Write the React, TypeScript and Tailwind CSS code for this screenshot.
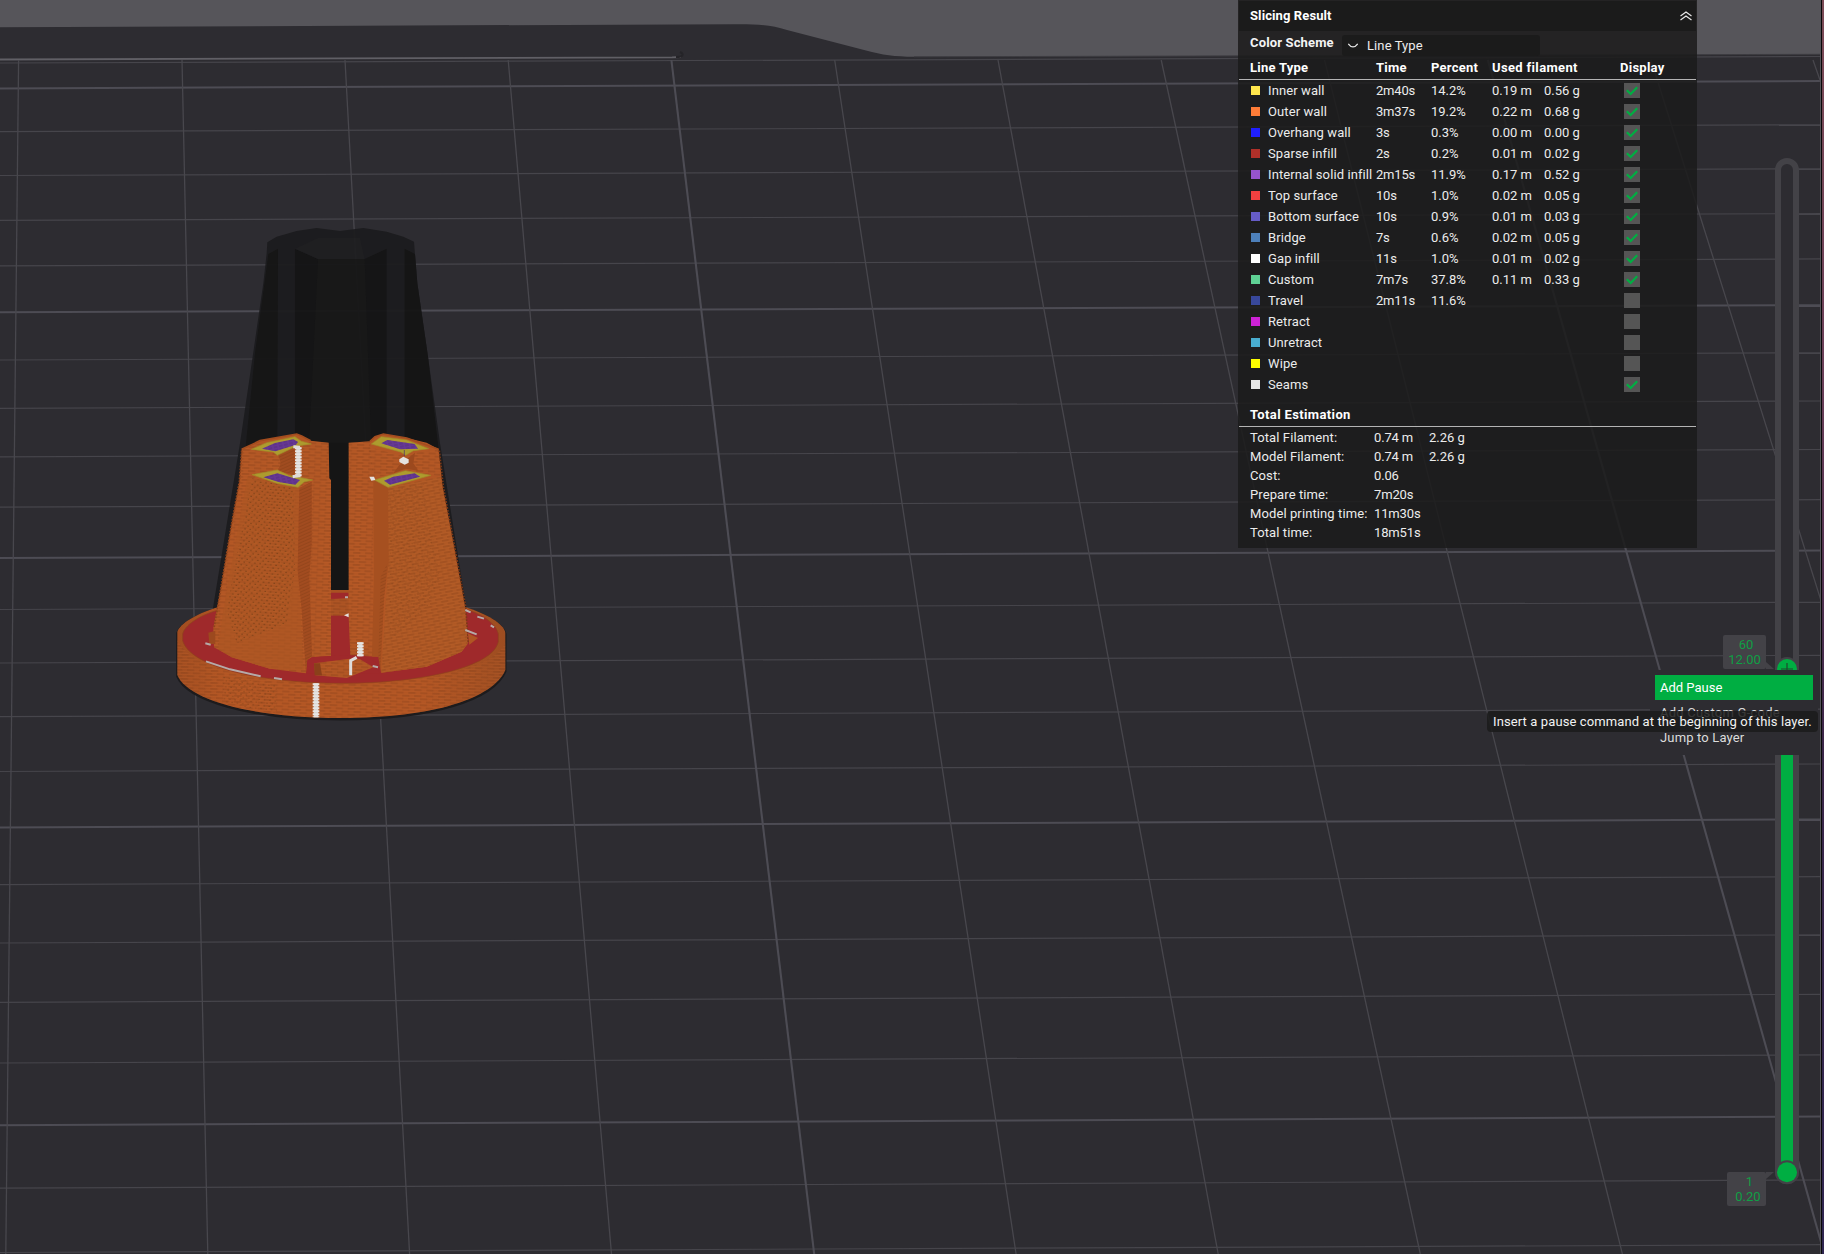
import React from "react";

const GREEN = "#00ae42";

type Row = {
  color: string;
  name: string;
  time?: string;
  percent?: string;
  length?: string;
  weight?: string;
  shown: boolean;
};

const ROWS: Row[] = [
  { color: "#ffe64d", name: "Inner wall", time: "2m40s", percent: "14.2%", length: "0.19 m", weight: "0.56 g", shown: true },
  { color: "#ff7d38", name: "Outer wall", time: "3m37s", percent: "19.2%", length: "0.22 m", weight: "0.68 g", shown: true },
  { color: "#1f1fff", name: "Overhang wall", time: "3s", percent: "0.3%", length: "0.00 m", weight: "0.00 g", shown: true },
  { color: "#b03029", name: "Sparse infill", time: "2s", percent: "0.2%", length: "0.01 m", weight: "0.02 g", shown: true },
  { color: "#9654cc", name: "Internal solid infill", time: "2m15s", percent: "11.9%", length: "0.17 m", weight: "0.52 g", shown: true },
  { color: "#f04040", name: "Top surface", time: "10s", percent: "1.0%", length: "0.02 m", weight: "0.05 g", shown: true },
  { color: "#665cc7", name: "Bottom surface", time: "10s", percent: "0.9%", length: "0.01 m", weight: "0.03 g", shown: true },
  { color: "#4d80ba", name: "Bridge", time: "7s", percent: "0.6%", length: "0.02 m", weight: "0.05 g", shown: true },
  { color: "#ffffff", name: "Gap infill", time: "11s", percent: "1.0%", length: "0.01 m", weight: "0.02 g", shown: true },
  { color: "#5ed194", name: "Custom", time: "7m7s", percent: "37.8%", length: "0.11 m", weight: "0.33 g", shown: true },
  { color: "#38489b", name: "Travel", time: "2m11s", percent: "11.6%", shown: false },
  { color: "#cd22d6", name: "Retract", shown: false },
  { color: "#49adcf", name: "Unretract", shown: false },
  { color: "#ffff00", name: "Wipe", shown: false },
  { color: "#e6e6e6", name: "Seams", shown: true },
];

const TOTALS: [string, string, string?][] = [
  ["Total Filament:", "0.74 m", "2.26 g"],
  ["Model Filament:", "0.74 m", "2.26 g"],
  ["Cost:", "0.06"],
  ["Prepare time:", "7m20s"],
  ["Model printing time:", "11m30s"],
  ["Total time:", "18m51s"],
];

// Plate grid: [y at x=0, y at x=1821, bold]
const H_LINES: [number, number, boolean][] = [
  [63, 56.5, false], [88.4, 81, true], [131.6, 124.8, false], [175.5, 168.8, false],
  [220.3, 213.6, false], [265.9, 258.9, false], [312.3, 305.2, true], [360, 352.8, false],
  [408.3, 401, false], [456.8, 449.5, false], [507.2, 499.7, false], [558, 550.5, true],
  [609.5, 602.3, false], [663, 655.3, false], [716.6, 709.2, false], [771.5, 764, false],
  [827.4, 819.4, true], [884.6, 876.6, false], [943, 934.8, false], [1002.3, 994.3, false],
  [1063, 1054.9, false], [1125.3, 1116.6, true], [1188.2, 1180, false], [1252.5, 1244.7, false],
];

// [x at the far edge, x at the bottom, bold]
const V_LINES: [number, number, boolean][] = [
  [18.6, 5.8, false], [182, 207.8, false], [345, 409.6, false], [508.2, 611.5, false],
  [671.4, 814.2, true], [834.7, 1016.1, false], [998, 1218.2, false], [1161.2, 1420.3, false],
  [1324.5, 1622.4, false], [1487.8, 1824.4, true], [1651, 2026.5, false], [1813, 2228.6, false],
];

function Plate() {
  return (
    <g>
      <rect width="1822" height="1254" fill="#56555a" />
      <path d="M0 27.2L735 24.2C760 24 772 25.500 787 30L866 50.500C882 55 895 56.600 914 56.800L1822 54.300V1254H0Z" fill="#2d2c31" />
      <path d="M0 59.500L672 57.300L681 57" stroke="#605f65" strokeWidth="1.800" fill="none" />
      <path d="M676 57C684 57 684 54 680 52" stroke="#252428" strokeWidth="2" fill="none" />
      <path d="M914 56.800L1822 54.300" stroke="#3d3c41" strokeWidth="1" />
      {H_LINES.map(([a, b, bold]) => (
        <line key={a} x1="0" y1={a} x2="1822" y2={b} stroke={bold ? "#4d4c54" : "#46454b"} strokeWidth={bold ? 2 : 1.2} />
      ))}
      {V_LINES.map(([a, b, bold]) => (
        <line key={a} x1={a} y1="60" x2={b} y2="1254" stroke={bold ? "#4d4c54" : "#48474d"} strokeWidth={bold ? 2.1 : 1.3} />
      ))}
    </g>
  );
}

function Ghost() {
  return (
    <g transform="translate(200 210) scale(0.33333)" opacity="0.94">
      <path d="M202 97L230 80L290 63L350 54L420 63L490 54L560 65L610 80L642 95L645 135L652 220L684 440L720 700L800 1200H38L120 700L158 440L190 220L200 130Z" fill="#1c1c1e" />
      <path d="M205 132L234 116L232 720H136L165 430L196 200Z" fill="#151515" />
      <path d="M285 116L354 147H494L560 116V740H285Z" fill="#141415" />
      <path d="M354 147H494L515 740H325Z" fill="#171717" />
      <path d="M614 116L645 132L652 220L684 440L716 720L780 1190L700 1100L614 720Z" fill="#141414" />
      <path d="M354 84H480L494 147H354L285 116Z" fill="#1f1f21" />
      <path d="M136 720L50 1200H180V720Z" fill="#161617" />
      <rect x="380" y="700" width="72" height="450" fill="#151515" />
    </g>
  );
}

function Seam({ x, y, h }: { x: number; y: number; h: number }) {
  return (
    <g>
      <line x1={x} y1={y} x2={x} y2={y + h} stroke="#d6d3d1" strokeWidth="13" />
      <line x1={x} y1={y} x2={x} y2={y + h} stroke="#e8e6e4" strokeWidth="20" strokeDasharray="6 3" />
    </g>
  );
}

function Island({ outer, inner }: { outer: string; inner: string }) {
  return (
    <g>
      <path d={outer} fill="#ad9b2e" stroke="#a08c29" strokeWidth="2" />
      <path d={inner} fill="#663794" />
      <path d={inner} fill="url(#fill-lines)" />
    </g>
  );
}

const DISC_SIDE =
  "M52 665C60 640 110 612 165 594L300 560H800L917 592C980 612 1030 640 1036 668V780C1000 865 820 924 543 924C260 924 80 865 52 795Z";
const DISC_FRONT =
  "M52 690C90 775 300 822 543 822C790 822 1000 775 1036 700V780C1000 865 820 924 543 924C260 924 80 865 52 795Z";
const DISC_TOP =
  "M68 672C74 646 115 618 168 602L300 570H800L917 598C965 612 1008 640 1015 672V695C1000 770 790 820 543 820C300 820 90 770 68 692Z";

function Model() {
  return (
    <g transform="translate(160 410) scale(0.33333)">
      <defs>
        <pattern id="layers" width="36" height="18" patternUnits="userSpaceOnUse" patternTransform="rotate(2)">
          <path d="M0 3H22M18 12H36M0 12H4" stroke="#7e3b17" strokeWidth="2.200" opacity="0.75" />
          <path d="M0 7H36M0 16H36" stroke="#bf612b" strokeWidth="2" opacity="0.5" />
        </pattern>
        <pattern id="layers-right" width="34" height="18" patternUnits="userSpaceOnUse" patternTransform="rotate(-10)">
          <path d="M0 3H22M17 12H34M0 12H4" stroke="#813d18" strokeWidth="2.200" opacity="0.75" />
          <path d="M0 7H34M0 16H34" stroke="#bd632b" strokeWidth="2" opacity="0.5" />
        </pattern>
        <pattern id="dots" width="16" height="18" patternUnits="userSpaceOnUse" patternTransform="rotate(6)">
          <path d="M1 4H5M9 13H13" stroke="#5a3310" strokeWidth="2.600" />
          <path d="M1 8H12" stroke="#bf6a2a" strokeWidth="2" opacity="0.5" />
        </pattern>
        <pattern id="facet" width="12" height="9" patternUnits="userSpaceOnUse" patternTransform="rotate(-24)">
          <path d="M0 4H12" stroke="#874018" strokeWidth="3" opacity="0.6" />
        </pattern>
        <pattern id="fill-lines" width="16" height="9" patternUnits="userSpaceOnUse" patternTransform="rotate(-14)">
          <path d="M0 3H11" stroke="#4a2773" strokeWidth="1.800" />
        </pattern>
        <linearGradient id="disc" x1="0" x2="1">
          <stop offset="0" stopColor="#a14d20" />
          <stop offset="0.15" stopColor="#b25523" />
          <stop offset="0.75" stopColor="#b25523" />
          <stop offset="1" stopColor="#9d4d21" />
        </linearGradient>
      </defs>

      {/* Base disc */}
      <path d={DISC_SIDE} transform="translate(0 4)" fill="#1c1b1d" stroke="#1c1b1d" strokeWidth="7" />
      <path d={DISC_SIDE} fill="url(#disc)" />
      <path d={DISC_FRONT} fill="url(#layers)" />
      <path d="M190 800L350 822V910L190 878Z" fill="url(#dots)" opacity="0.5" />
      <path d={DISC_TOP} fill="#9f292b" stroke="#8c431c" strokeWidth="2" />

      {/* Rear of the slot */}
      <rect x="507" y="98" width="61" height="444" fill="#151515" />
      <rect x="512" y="540" width="56" height="78" fill="#a95122" />
      <path d="M512 548H566V564L512 568Z" fill="#9f292b" />
      <rect x="512" y="566" width="56" height="52" fill="url(#layers)" />
      <rect x="512" y="617" width="58" height="140" fill="#9f292b" />

      {/* Left tower */}
      <path d="M245 118L300 92L410 72L425 78L452 92L506 98L508 205L513 210V738L455 742L442 750L438 790L330 776L215 742L162 712L160 655L185 520L215 340L238 215Z" fill="#b25624" />
      <path d="M245 118L300 100L430 92L506 98V205L513 210V738L455 742L442 750L438 790L330 776L215 742L162 712L160 655L185 520L238 215Z" fill="url(#layers)" />
      <path d="M262 200L418 235L415 480L430 780L330 776L215 742L175 715L190 600Z" fill="#ae5623" />
      <path d="M262 200L418 235L415 480L430 780L330 776L215 742L175 715L190 600Z" fill="url(#layers)" opacity="0.4" />
      <path d="M275 205L400 232L405 480L380 640L230 700L200 600Z" fill="url(#dots)" opacity="0.75" />
      <path d="M418 235L455 215V400L448 500L456 738L442 750L438 790L425 600L413 480Z" fill="#a34c20" />
      <path d="M418 235L455 215V400L448 500L456 738L442 750L438 790L425 600L413 480Z" fill="url(#facet)" />
      <path d="M355 134L404 108V196L355 182L362 158Z" fill="#a14c20" />
      <path d="M355 134L404 108V196L355 182L362 158Z" fill="url(#facet)" />

      {/* Right tower */}
      <path d="M566 98L630 94L645 80L670 72L740 84L800 98L836 118L848 230L880 400L915 590L924 700L905 725L800 770L664 788L658 740L605 738L571 735L566 620Z" fill="#b25624" />
      <path d="M566 98L630 94L640 200V738H571L566 620Z" fill="url(#layers)" />
      <path d="M625 110L715 135L760 130L836 118L842 200L740 180L640 205Z" fill="url(#layers)" />
      <path d="M684 232L842 200L880 400L915 590L924 700L905 725L800 770L664 788L684 470Z" fill="#af5824" />
      <path d="M684 232L842 200L880 400L915 590L924 700L905 725L800 770L664 788L684 470Z" fill="url(#layers-right)" />
      <path d="M690 240L790 218L840 500L800 600L690 700Z" fill="url(#dots)" opacity="0.3" />
      <path d="M640 205L684 232L686 460L672 560L662 788L655 740H636L642 500Z" fill="#a65020" />
      <path d="M662 500L682 460L672 580L660 780L655 740Z" fill="url(#facet)" />
      <path d="M737 150L765 128L760 160L775 182L737 176L700 190L718 165Z" fill="#9c491e" />
      <path d="M245 122L238 215L215 340L185 520L162 655" stroke="#8e431b" strokeWidth="5" strokeDasharray="5 4" fill="none" />
      <path d="M838 122L850 230L882 400L917 590L925 700" stroke="#7d3917" strokeWidth="5" strokeDasharray="5 4" fill="none" />

      {/* Cut surfaces */}
      <path d="M245 118L300 92L410 72L425 78L452 92" stroke="#a34d1f" strokeWidth="5" fill="none" />
      <path d="M630 94L645 80L670 72L740 84L836 118" stroke="#a34d1f" strokeWidth="5" fill="none" />
      <Island outer="M274 118L320 98L405 80L424 94L454 102L410 108L352 136L340 126Z" inner="M306 116L345 99L400 88L414 96L408 104L346 124Z" />
      <Island outer="M634 102L664 80L740 90L806 116L760 122L737 136L722 126L670 112Z" inner="M664 100L682 90L764 102L774 116L720 118Z" />
      <Island outer="M276 194L352 180L386 196L458 210L432 216L414 232L350 220Z" inner="M310 202L352 190L420 210L406 224L356 216Z" />
      <Island outer="M644 210L736 182L812 196L770 208L684 232Z" inner="M672 212L700 200L764 190L780 200L690 224Z" />

      {/* Keyed pocket in the base */}
      <path d="M442 752L456 742L510 738L610 736L650 758L658 790H440Z" fill="#9f292b" />
      <path d="M462 760L570 746L600 748L640 772L560 804L466 796Z" fill="#b05523" />
      <path d="M462 760L570 746L600 748L640 772L560 804L466 796Z" fill="url(#layers)" />
      <path d="M462 760L480 760L486 796H464Z" fill="#8a401a" />
      <path d="M145 668L166 662V702H148Z" fill="#9c491e" />
      <path d="M924 670L954 684L928 704Z" fill="#b05523" />

      <Seam x={415} y={112} h={90} />
      <Seam x={468} y={820} h={102} />
      <Seam x={601} y={697} h={42} />
      <path d="M572 796V752L590 742M400 110L420 112M398 200L420 196" stroke="#dedbd9" strokeWidth="9" fill="none" />
      <path d="M718 148L730 140L746 148V158L734 164L718 156ZM628 200L642 200L646 210L634 212ZM552 616L566 610V622Z" fill="#e4e2e0" />
      <path d="M138 754L210 778L302 799M342 804L366 808M136 700L152 704M916 600L932 607M952 620L972 626M916 660L950 673M992 646L1002 652M638 768L654 772M555 562H564" stroke="#b5aaa8" strokeWidth="6" fill="none" />
      <path d="M733 120V138" stroke="#4c2c72" strokeWidth="2" />
    </g>
  );
}

function Scene() {
  return (
    <svg className="absolute inset-0" width="1824" height="1254" viewBox="0 0 1824 1254">
      <defs>
        <linearGradient id="edge" x1="0" x2="0" y1="0" y2="1">
          <stop offset="0" stopColor="#7a4a55" />
          <stop offset="0.3" stopColor="#6a3f58" />
          <stop offset="0.6" stopColor="#3a2548" />
          <stop offset="1" stopColor="#2f2650" />
        </linearGradient>
      </defs>
      <Plate />
      <Ghost />
      <Model />
      <rect x="1820" width="1" height="1254" fill="#56555a" />
      <rect x="1821" width="1" height="1254" fill="#0a0a0a" />
      <rect x="1822" width="2" height="1254" fill="url(#edge)" />
    </svg>
  );
}

function Checkbox({ checked }: { checked: boolean }) {
  return (
    <span className="flex h-[15px] w-4 items-center justify-center bg-[#555555]">
      {checked && (
        <svg width="16" height="15" viewBox="0 0 16 15" fill="none" stroke={GREEN} strokeWidth="2.200">
          <path d="M2.800 7.300L6.700 11L13.200 4.200" />
        </svg>
      )}
    </span>
  );
}

function ResultPanel() {
  return (
    <section className="absolute left-[1238px] top-0 flex h-[548px] w-[459px] flex-col bg-[#1b1b1b]/85 text-[#ececec]">
      <header className="mx-px mt-px flex h-[30px] items-center justify-between bg-[#1b1b1b] pl-[11px] pr-1 text-white">
        <h1 className="text-[13px] font-bold tracking-[0.1px]">Slicing Result</h1>
        <svg width="12" height="10" viewBox="0 0 12 10" fill="none" stroke="#e8e8e8" strokeWidth="1.200">
          <path d="M0.500 5L6 1L11.500 5M0.500 9L6 5L11.500 9" />
        </svg>
      </header>
      <div className="flex h-[25px] pl-3">
        <span className="w-[92px] pt-[2px] text-[13px] font-bold tracking-[0.15px] text-[#f4f4f4]">Color Scheme</span>
        <button className="mt-1 flex h-[21px] w-[198px] items-center rounded-[3px] bg-[#1b1b1b] pl-[6px] text-[13px] tracking-[0.1px]">
          <svg className="mr-[9px]" width="10" height="5" viewBox="0 0 10 5" fill="none" stroke="#e8e8e8" strokeWidth="1.200">
            <path d="M0.300 0.800C3 4.800 7 4.800 9.700 0.800" />
          </svg>
          Line Type
        </button>
      </div>
      <div className="mx-px grid h-[24px] grid-cols-[126px_55px_61px_128px_auto] items-center border-b border-[#b4b4b4] pl-[11px] text-[13px] font-bold tracking-[0.25px] text-white">
        <span>Line Type</span>
        <span>Time</span>
        <span>Percent</span>
        <span className="tracking-[0.35px]">Used filament</span>
        <span>Display</span>
      </div>
      <div className="flex flex-col">
        {ROWS.map((r) => (
          <div key={r.name} className="grid h-[21px] grid-cols-[17px_108px_55px_61px_52px_80px_auto] items-center whitespace-nowrap pl-[13px] text-[13px]">
            <i className="size-[9px]" style={{ backgroundColor: r.color }} />
            <span className="tracking-[0.1px]">{r.name}</span>
            <span className="tracking-[-0.2px]">{r.time}</span>
            <span>{r.percent}</span>
            <span>{r.length}</span>
            <span>{r.weight}</span>
            <Checkbox checked={r.shown} />
          </div>
        ))}
      </div>
      <h2 className="mx-px mt-2 flex h-[24px] items-center border-b border-[#b4b4b4] pl-[11px] text-[13px] font-bold tracking-[0.37px] text-white">Total Estimation</h2>
      <div className="flex flex-col pt-px">
        {TOTALS.map(([label, a, b]) => (
          <div key={label} className="grid h-[19px] grid-cols-[124px_55px_auto] items-center whitespace-nowrap pl-3 text-[13px]">
            <span className="tracking-[0.1px]">{label}</span>
            <span className="tracking-[-0.15px]">{a}</span>
            <span>{b}</span>
          </div>
        ))}
      </div>
    </section>
  );
}

function LayerSlider() {
  return (
    <div className="absolute left-[1723px] top-[158px] h-[1048px] w-[76px] text-[#0f9f45]">
      <div className="absolute right-0 top-0 h-[1026px] w-6 rounded-full border-[6px] border-[#434247] bg-[#2d2c31]" />
      <div className="absolute right-[6px] top-[512px] h-[494px] w-3 bg-[#00ae42]" />
      <svg className="absolute left-0 top-0" width="76" height="1048" viewBox="0 0 76 1048">
        <path d="M43 504L51 511H43ZM43 1014H51L43 1021Z" fill="#434247" />
        <circle cx="64" cy="511" r="12" fill="#434247" />
        <circle cx="64" cy="511" r="10" fill={GREEN} />
        <path d="M64 505V517M58 511H70" stroke="#1d4a2d" strokeWidth="1.200" />
        <circle cx="64" cy="1014.300" r="12" fill="#434247" />
        <circle cx="64" cy="1014.300" r="10" fill={GREEN} />
      </svg>
      <div className="absolute left-0 top-[477px] flex h-[34px] w-[43px] flex-col items-center justify-center rounded-[2px] bg-[#434247] text-[13px] leading-[15px]">
        <span className="pl-[3px]">60</span>
        <span>12.00</span>
      </div>
      <div className="absolute left-1 top-[1014px] flex h-[34px] w-[39px] flex-col items-center justify-center rounded-[2px] bg-[#434247] pl-[3px] text-[13px] leading-[15px]">
        <span className="pl-[3px]">1</span>
        <span>0.20</span>
      </div>
    </div>
  );
}

function LayerMenu() {
  return (
    <div className="absolute left-[1650px] top-[670px] flex h-[85px] w-[168px] flex-col bg-[#2d2c31] p-[5px] text-[13px] tracking-[0.15px] text-[#dcdcdc]">
      <div className="flex h-[25px] items-center bg-[#00ae42] pl-[5px] tracking-normal text-white">Add Pause</div>
      <div className="flex h-[25px] items-center pl-[5px] tracking-[0.25px]">Add Custom G-code</div>
      <div className="flex h-[25px] items-center pl-[5px]">Jump to Layer</div>
    </div>
  );
}

export default function App() {
  return (
    <main className="relative h-[1254px] w-[1824px] overflow-hidden bg-[#2d2c31] font-['Roboto',sans-serif]">
      <Scene />
      <ResultPanel />
      <LayerSlider />
      <LayerMenu />
      <div className="absolute left-[1487px] top-[711px] flex h-[21px] w-[331px] items-center whitespace-nowrap rounded-[4px] bg-[#1b1b1b]/85 pl-[6px] text-[13px] tracking-[0.11px] text-[#f2f2f2]">
        Insert a pause command at the beginning of this layer.
      </div>
    </main>
  );
}
